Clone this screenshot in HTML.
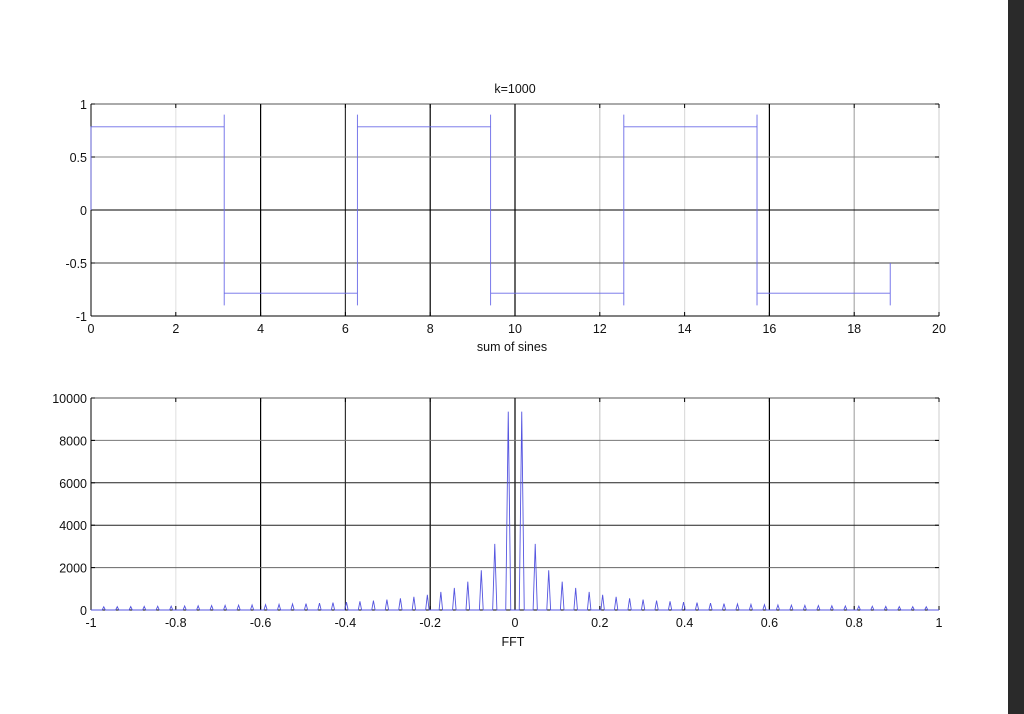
<!DOCTYPE html>
<html><head><meta charset="utf-8"><style>
html,body{margin:0;padding:0;background:#fff;width:1024px;height:714px;overflow:hidden}
svg{position:absolute;left:0;top:0}
text{font-family:"Liberation Sans",Arial,sans-serif;font-size:12.5px;fill:#111}
</style></head><body>
<svg id="s" width="1024" height="714" xmlns="http://www.w3.org/2000/svg">
<rect x="1008" y="0" width="16" height="714" fill="#2a2a2a"/>
<g id="top"></g>
<g id="bot"></g>
<text x="515" y="93" text-anchor="middle">k=1000</text>
<text x="512" y="351" text-anchor="middle">sum of sines</text>
<text x="513" y="646" text-anchor="middle">FFT</text>
</svg>
<script>
var NS="http://www.w3.org/2000/svg";
function el(p,n,a,t){var e=document.createElementNS(NS,n);for(var k in a)e.setAttribute(k,a[k]);if(t!==undefined)e.textContent=t;p.appendChild(e);return e;}
var L=91,R=939;
var vcols=[null,"#e4e4e4","#000","#333","#000","#000","#ccc","#ddd","#000","#aaa",null];
function axes(g,T,B,xl,yl,ycols){
  for(var i=1;i<10;i++){var x=L+(R-L)*i/10;el(g,"line",{x1:x,x2:x,y1:T,y2:B,stroke:vcols[i],"stroke-width":1.2});}
  var n=yl.length-1;
  for(var j=1;j<n;j++){var y=B-(B-T)*j/n;el(g,"line",{x1:L,x2:R,y1:y,y2:y,stroke:ycols[j-1],"stroke-width":1});}
  el(g,"line",{x1:L,x2:R,y1:T,y2:T,stroke:"#555"});
  el(g,"line",{x1:L,x2:R,y1:B,y2:B,stroke:"#000"});
  el(g,"line",{x1:L,x2:L,y1:T,y2:B,stroke:"#000"});
  el(g,"line",{x1:R,x2:R,y1:T,y2:B,stroke:"#ccc"});
  for(var i=0;i<=10;i++){var x=L+(R-L)*i/10;
    el(g,"line",{x1:x,x2:x,y1:B,y2:B-4,stroke:"#000"});el(g,"line",{x1:x,x2:x,y1:T,y2:T+4,stroke:"#000"});
    el(g,"text",{x:x,y:B+17,"text-anchor":"middle"},xl[i]);}
  for(var j=0;j<=n;j++){var y=B-(B-T)*j/n;
    el(g,"line",{x1:L,x2:L+4,y1:y,y2:y,stroke:"#000"});el(g,"line",{x1:R,x2:R-4,y1:y,y2:y,stroke:"#000"});
    el(g,"text",{x:L-4,y:y+5,"text-anchor":"end"},yl[j]);}
}
var tg=document.getElementById("top"),bg=document.getElementById("bot");
axes(tg,104,316,["0","2","4","6","8","10","12","14","16","18","20"],["-1","-0.5","0","0.5","1"],["#444","#000","#888"]);
axes(bg,398,610,["-1","-0.8","-0.6","-0.4","-0.2","0","0.2","0.4","0.6","0.8","1"],["0","2000","4000","6000","8000","10000"],["#666","#222","#222","#777"]);
function X(t){return L+t*(R-L)/20;}function Y(v){return 210-v*106;}
var d="M"+L+" "+Y(0)+" L"+L+" "+Y(0.785);var s=1;
for(var k=1;k<=6;k++){var x=X(Math.PI*k);d+=" L"+x+" "+Y(0.785*s);
 var sp= k==6? -0.5 : -0.9*s; d+=" L"+x+" "+Y(0.9*s)+" L"+x+" "+Y(sp);
 if(k<6){d+=" L"+x+" "+Y(-0.785*s);} s=-s;}
el(tg,"path",{d:d,fill:"none",stroke:"#6a6ae8","stroke-width":0.9});
var pd="M"+L+" 610";var pk=[];
for(var n=1;n<80;n+=2){var f=n*0.0159; if(f>1)break;pk.push([f,9400/n]);pk.push([-f,9400/n]);}
pk.sort(function(a,b){return a[0]-b[0];});
for(var i=0;i<pk.length;i++){var x=515+pk[i][0]*424,h=610-pk[i][1]*0.0211;var w=Math.min(2.5,1.6+pk[i][1]/6000);
 pd+=" L"+(x-w)+" 610 L"+x+" "+h+" L"+(x+w)+" 610";}
pd+=" L"+R+" 610";
el(bg,"path",{d:pd,fill:"none",stroke:"#5555e0","stroke-width":0.9});
</script>
</body></html>
